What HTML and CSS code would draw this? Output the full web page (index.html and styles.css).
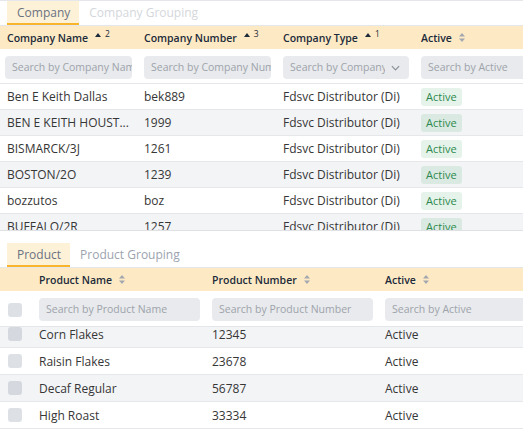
FILE: index.html
```html
<!DOCTYPE html>
<html>
<head>
<meta charset="utf-8">
<link rel="stylesheet" href="styles.css">
</head>
<body>
<div class="page">
  <section class="panel company">
    <div class="tabs tabs-top">
      <span class="tab tab-active">Company</span>
      <span class="tab tab-idle light">Company Grouping</span>
    </div>
    <div class="grid cgrid head">
      <div class="th">Company Name <svg class="sort" viewBox="0 0 6 4" width="6" height="4"><path d="M0 4 L3 0 L6 4Z"/></svg><span class="ord">2</span></div>
      <div class="th">Company Number <svg class="sort" viewBox="0 0 6 4" width="6" height="4"><path d="M0 4 L3 0 L6 4Z"/></svg><span class="ord">3</span></div>
      <div class="th">Company Type <svg class="sort" viewBox="0 0 6 4" width="6" height="4"><path d="M0 4 L3 0 L6 4Z"/></svg><span class="ord">1</span></div>
      <div class="th">Active <svg class="both" viewBox="0 0 6 9" width="6" height="9"><path d="M0 3.5 L3 0 L6 3.5Z M0 5.5 L3 9 L6 5.5Z"/></svg></div>
    </div>
    <div class="grid cgrid filters">
      <div class="fc first"><div class="input">Search by Company Name</div></div>
      <div class="fc"><div class="input">Search by Company Number</div></div>
      <div class="fc"><div class="input select"><span class="sel-text">Search by Company Type</span><svg class="chev" viewBox="0 0 10 6" width="9" height="6"><path d="M1 1 L5 5 L9 1" fill="none" stroke="#8a9099" stroke-width="1.3"/></svg></div></div>
      <div class="fc"><div class="input">Search by Active</div></div>
    </div>
    <div class="cbody">
      <div class="grid cgrid row"><div class="td">Ben E Keith Dallas</div><div class="td">bek889</div><div class="td">Fdsvc Distributor (Di)</div><div class="td"><span class="badge">Active</span></div></div>
      <div class="grid cgrid row alt"><div class="td">BEN E KEITH HOUST...</div><div class="td">1999</div><div class="td">Fdsvc Distributor (Di)</div><div class="td"><span class="badge">Active</span></div></div>
      <div class="grid cgrid row"><div class="td">BISMARCK/3J</div><div class="td">1261</div><div class="td">Fdsvc Distributor (Di)</div><div class="td"><span class="badge">Active</span></div></div>
      <div class="grid cgrid row alt"><div class="td">BOSTON/2O</div><div class="td">1239</div><div class="td">Fdsvc Distributor (Di)</div><div class="td"><span class="badge">Active</span></div></div>
      <div class="grid cgrid row"><div class="td">bozzutos</div><div class="td">boz</div><div class="td">Fdsvc Distributor (Di)</div><div class="td"><span class="badge">Active</span></div></div>
      <div class="grid cgrid row alt"><div class="td">BUFFALO/2R</div><div class="td">1257</div><div class="td">Fdsvc Distributor (Di)</div><div class="td"><span class="badge">Active</span></div></div>
    </div>
  </section>

  <section class="panel product">
    <div class="tabs">
      <span class="tab tab-active">Product</span>
      <span class="tab tab-idle">Product Grouping</span>
    </div>
    <div class="grid pgrid head">
      <div class="th"></div>
      <div class="th">Product Name <svg class="both" viewBox="0 0 6 9" width="6" height="9"><path d="M0 3.5 L3 0 L6 3.5Z M0 5.5 L3 9 L6 5.5Z"/></svg></div>
      <div class="th">Product Number <svg class="both" viewBox="0 0 6 9" width="6" height="9"><path d="M0 3.5 L3 0 L6 3.5Z M0 5.5 L3 9 L6 5.5Z"/></svg></div>
      <div class="th">Active <svg class="both" viewBox="0 0 6 9" width="6" height="9"><path d="M0 3.5 L3 0 L6 3.5Z M0 5.5 L3 9 L6 5.5Z"/></svg></div>
    </div>
    <div class="grid pgrid filters pfilters">
      <div class="fc cbx-cell"><span class="cbx"></span></div>
      <div class="fc"><div class="input">Search by Product Name</div></div>
      <div class="fc"><div class="input">Search by Product Number</div></div>
      <div class="fc"><div class="input">Search by Active</div></div>
    </div>
    <div class="pbody">
      <div class="pinner">
        <div class="grid pgrid prow alt"><div class="td cbx-cell"><span class="cbx"></span></div><div class="td">Corn Flakes</div><div class="td">12345</div><div class="td">Active</div></div>
        <div class="grid pgrid prow"><div class="td cbx-cell"><span class="cbx"></span></div><div class="td">Raisin Flakes</div><div class="td">23678</div><div class="td">Active</div></div>
        <div class="grid pgrid prow alt"><div class="td cbx-cell"><span class="cbx"></span></div><div class="td">Decaf Regular</div><div class="td">56787</div><div class="td">Active</div></div>
        <div class="grid pgrid prow"><div class="td cbx-cell"><span class="cbx"></span></div><div class="td">High Roast</div><div class="td">33334</div><div class="td">Active</div></div>
      </div>
    </div>
  </section>
</div>
</body>
</html>
```

FILE: styles.css
```css
* { box-sizing: border-box; }
html, body { margin: 0; padding: 0; background: #fff; }
body {
  font-family: "Open Sans", "Noto Sans", sans-serif;
  color: #333;
  width: 523px;
  overflow: hidden;
}
.page { width: 523px; overflow: hidden; }
.panel { width: 523px; overflow: hidden; }

.tabs {
  display: flex;
  height: 25px;
  padding-left: 7px;
  border-bottom: 1px solid #e6e7ea;
}
.tabs-top { border-top: 1px solid #e6e7ea; height: 26px; }
.tab {
  height: 24px;
  line-height: 23px;
  font-size: 12px;
  padding: 0 9px 0 10px;
  white-space: nowrap;
}
.tab-active {
  background: #fdf1d8;
  color: #6b7280;
  border-bottom: 2px solid #f8b52b;
}
.tab-idle { color: #9ca3af; }
.tab-idle.light { color: #d4d7dc; }

.grid { display: grid; width: 560px; }
.cgrid { grid-template-columns: 137px 139px 138px 146px; }
.pgrid { grid-template-columns: 32px 173px 173px 182px; }

.head {
  background: #fdeac5;
  height: 23px;
  align-items: center;
}
.th {
  font-size: 10.5px;
  font-weight: 600;
  color: #1c2a3a;
  padding-left: 7px;
  white-space: nowrap;
  display: flex;
  align-items: center;
}
.sort { fill: #1c2a3a; margin-left: 7px; margin-top: -5px; }
.ord { font-size: 8.5px; font-weight: 400; margin-left: 4px; margin-top: -8px; }
.both { fill: #a3a8b0; margin-left: 7px; }

.filters {
  height: 35px;
  padding-top: 7px;
  border-bottom: 1px solid #e4e6e9;
}
.fc { padding: 0 5px 0 7px; }
.fc.first { padding-left: 5px; }
.input {
  height: 23px;
  border-radius: 4px;
  background: #e8eaed;
  color: #9ea3ab;
  font-size: 10.5px;
  line-height: 23px;
  padding-left: 7px;
  white-space: nowrap;
  overflow: hidden;
  position: relative;
}
.select { padding-right: 24px; }
.sel-text { display: block; overflow: hidden; white-space: nowrap; }
.chev { position: absolute; right: 9px; top: 9px; }

.cbody {
  height: 147px;
  overflow: hidden;
  border-bottom: 1px solid #dfe1e5;
  margin-bottom: 12px;
}
.row {
  height: 26px;
  border-bottom: 1px solid #e6e7ea;
  align-items: center;
}
.alt { background: #f3f4f6; }
.td {
  font-size: 12px;
  color: #363636;
  padding-left: 7px;
  white-space: nowrap;
}
.badge {
  display: inline-block;
  height: 18px;
  line-height: 18px;
  padding: 0 5px;
  border-radius: 3px;
  font-size: 11px;
  color: #2d8a4e;
  background: rgba(40, 160, 85, 0.12);
}

.pfilters { height: 36px; }
.cbx-cell { padding-left: 8px; display: flex; align-items: center; }
.pfilters .cbx-cell { height: 23px; }
.cbx {
  display: inline-block;
  width: 14px;
  height: 14px;
  border-radius: 3px;
  background: rgba(150, 160, 175, 0.32);
}
.pbody { height: 110px; overflow: hidden; }
.pinner { margin-top: -6px; }
.prow {
  height: 27px;
  border-bottom: 1px solid #e6e7ea;
  align-items: center;
}
```
